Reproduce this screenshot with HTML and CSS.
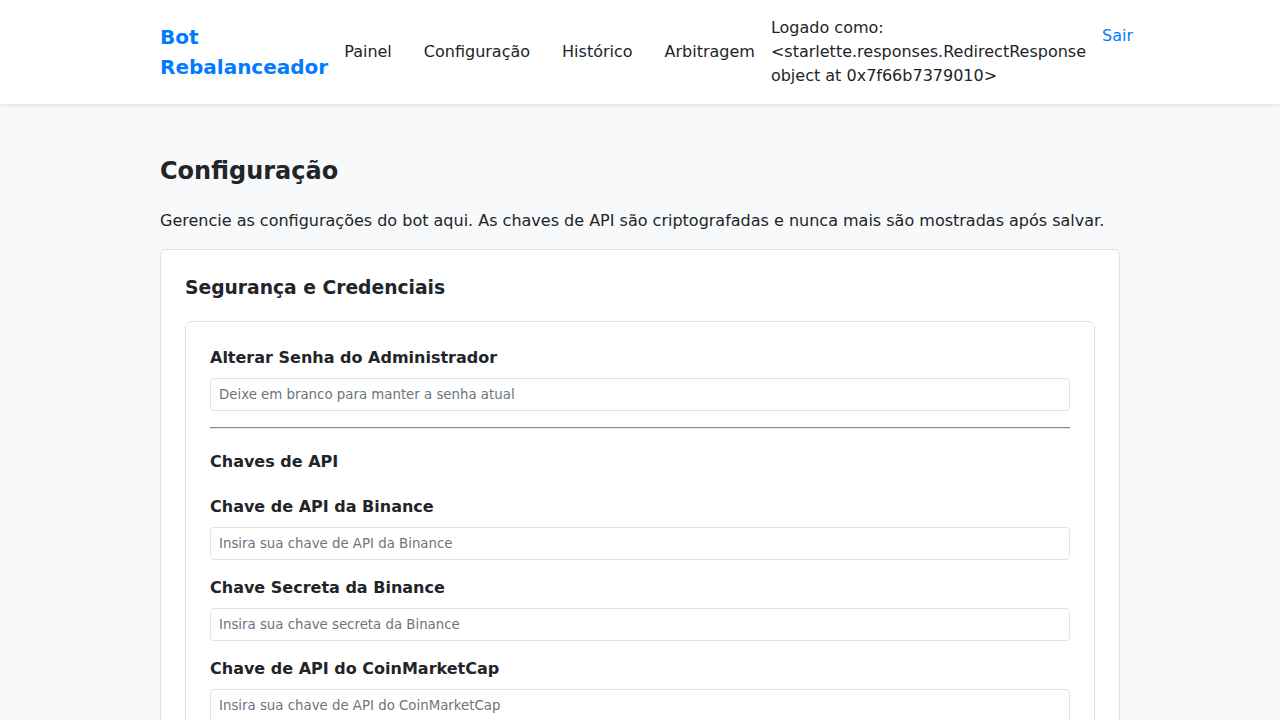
FILE: index.html
```html
<!DOCTYPE html>
<html lang="pt-BR">
<head>
<meta charset="utf-8">
<title>Configuração - Bot Rebalanceador</title>
<link rel="stylesheet" href="styles.css">
</head>
<body>
<header class="topbar">
  <nav class="topbar-inner">
    <a class="brand" href="#">Bot Rebalanceador</a>
    <ul class="nav-links">
      <li><a class="nav-link" href="#">Painel</a></li>
      <li><a class="nav-link" href="#">Configuração</a></li>
      <li><a class="nav-link" href="#">Histórico</a></li>
      <li><a class="nav-link" href="#">Arbitragem</a></li>
    </ul>
    <span class="user-info">Logado como: &lt;starlette.responses.RedirectResponse object at 0x7f66b7379010&gt;</span>
    <a class="logout" href="#">Sair</a>
  </nav>
</header>
<main class="container">
  <h2 class="page-title">Configuração</h2>
  <p class="intro">Gerencie as configurações do bot aqui. As chaves de API são criptografadas e nunca mais são mostradas após salvar.</p>
  <section class="card">
    <h3 class="card-title">Segurança e Credenciais</h3>
    <div class="panel">
      <div class="form-group">
        <label class="form-label" for="senha">Alterar Senha do Administrador</label>
        <input class="form-input" id="senha" type="password" placeholder="Deixe em branco para manter a senha atual">
      </div>
      <hr class="divider">
      <h4 class="sub-title">Chaves de API</h4>
      <div class="form-group">
        <label class="form-label" for="bkey">Chave de API da Binance</label>
        <input class="form-input" id="bkey" type="text" placeholder="Insira sua chave de API da Binance">
      </div>
      <div class="form-group">
        <label class="form-label" for="bsecret">Chave Secreta da Binance</label>
        <input class="form-input" id="bsecret" type="password" placeholder="Insira sua chave secreta da Binance">
      </div>
      <div class="form-group">
        <label class="form-label" for="cmc">Chave de API do CoinMarketCap</label>
        <input class="form-input" id="cmc" type="text" placeholder="Insira sua chave de API do CoinMarketCap">
      </div>
    </div>
  </section>
</main>
</body>
</html>
```
FILE: styles.css
```css
* { box-sizing: border-box; }
html, body { margin: 0; padding: 0; }
body {
  font-family: "DejaVu Sans", sans-serif;
  font-size: 16px;
  line-height: 1.5;
  color: #212529;
  background: #f8f9fa;
}
a { text-decoration: none; }

.topbar {
  background: #ffffff;
  box-shadow: 0 2px 4px rgba(0, 0, 0, 0.08);
  padding: 16px 0;
}
.topbar-inner {
  width: 960px;
  margin: 0 auto;
  display: flex;
  align-items: center;
  min-height: 72px;
}
.brand {
  font-size: 20px;
  font-weight: bold;
  color: #007bff;
  line-height: 1.5;
  min-width: min-content;
  flex: 0 1 0;
}
.nav-links {
  list-style: none;
  margin: 0;
  padding: 0;
  display: flex;
}
.nav-link {
  display: block;
  padding: 0 16px;
  color: #212529;
}
.user-info {
  flex: 0 1 0;
  min-width: min-content;
}
.logout {
  align-self: flex-start;
  padding: 8px 0 0 16px;
  color: #007bff;
}

.container {
  width: 960px;
  margin: 0 auto;
  padding-top: 29px;
}
.page-title {
  font-size: 24px;
  font-weight: bold;
  margin: 20px 0;
}
.intro {
  margin: 20px 0 16px;
}
.card {
  background: #ffffff;
  border: 1px solid #dee2e6;
  border-radius: 6px;
  padding: 24px;
}
.card-title {
  font-size: 18.72px;
  margin: 0 0 19px;
}
.panel {
  border: 1px solid #dee2e6;
  border-radius: 6px;
  padding: 24px;
}
.form-group {
  margin-bottom: 16px;
}
.form-label {
  display: block;
  font-weight: bold;
  margin-bottom: 8px;
}
.form-input {
  display: block;
  width: 100%;
  height: 33px;
  padding: 8px;
  font-family: "DejaVu Sans", sans-serif;
  font-size: 13.33px;
  border: 1px solid #dee2e6;
  border-radius: 4px;
  background: #ffffff;
  color: #212529;
}
.form-input::placeholder {
  color: #6c757d;
}
.divider {
  margin: 16px 0 0;
  border: 0;
  border-top: 1px solid #8a8a8a;
  border-bottom: 1px solid #e5e5e5;
}
.sub-title {
  font-size: 16px;
  margin: 21px 0 21px;
}
```
